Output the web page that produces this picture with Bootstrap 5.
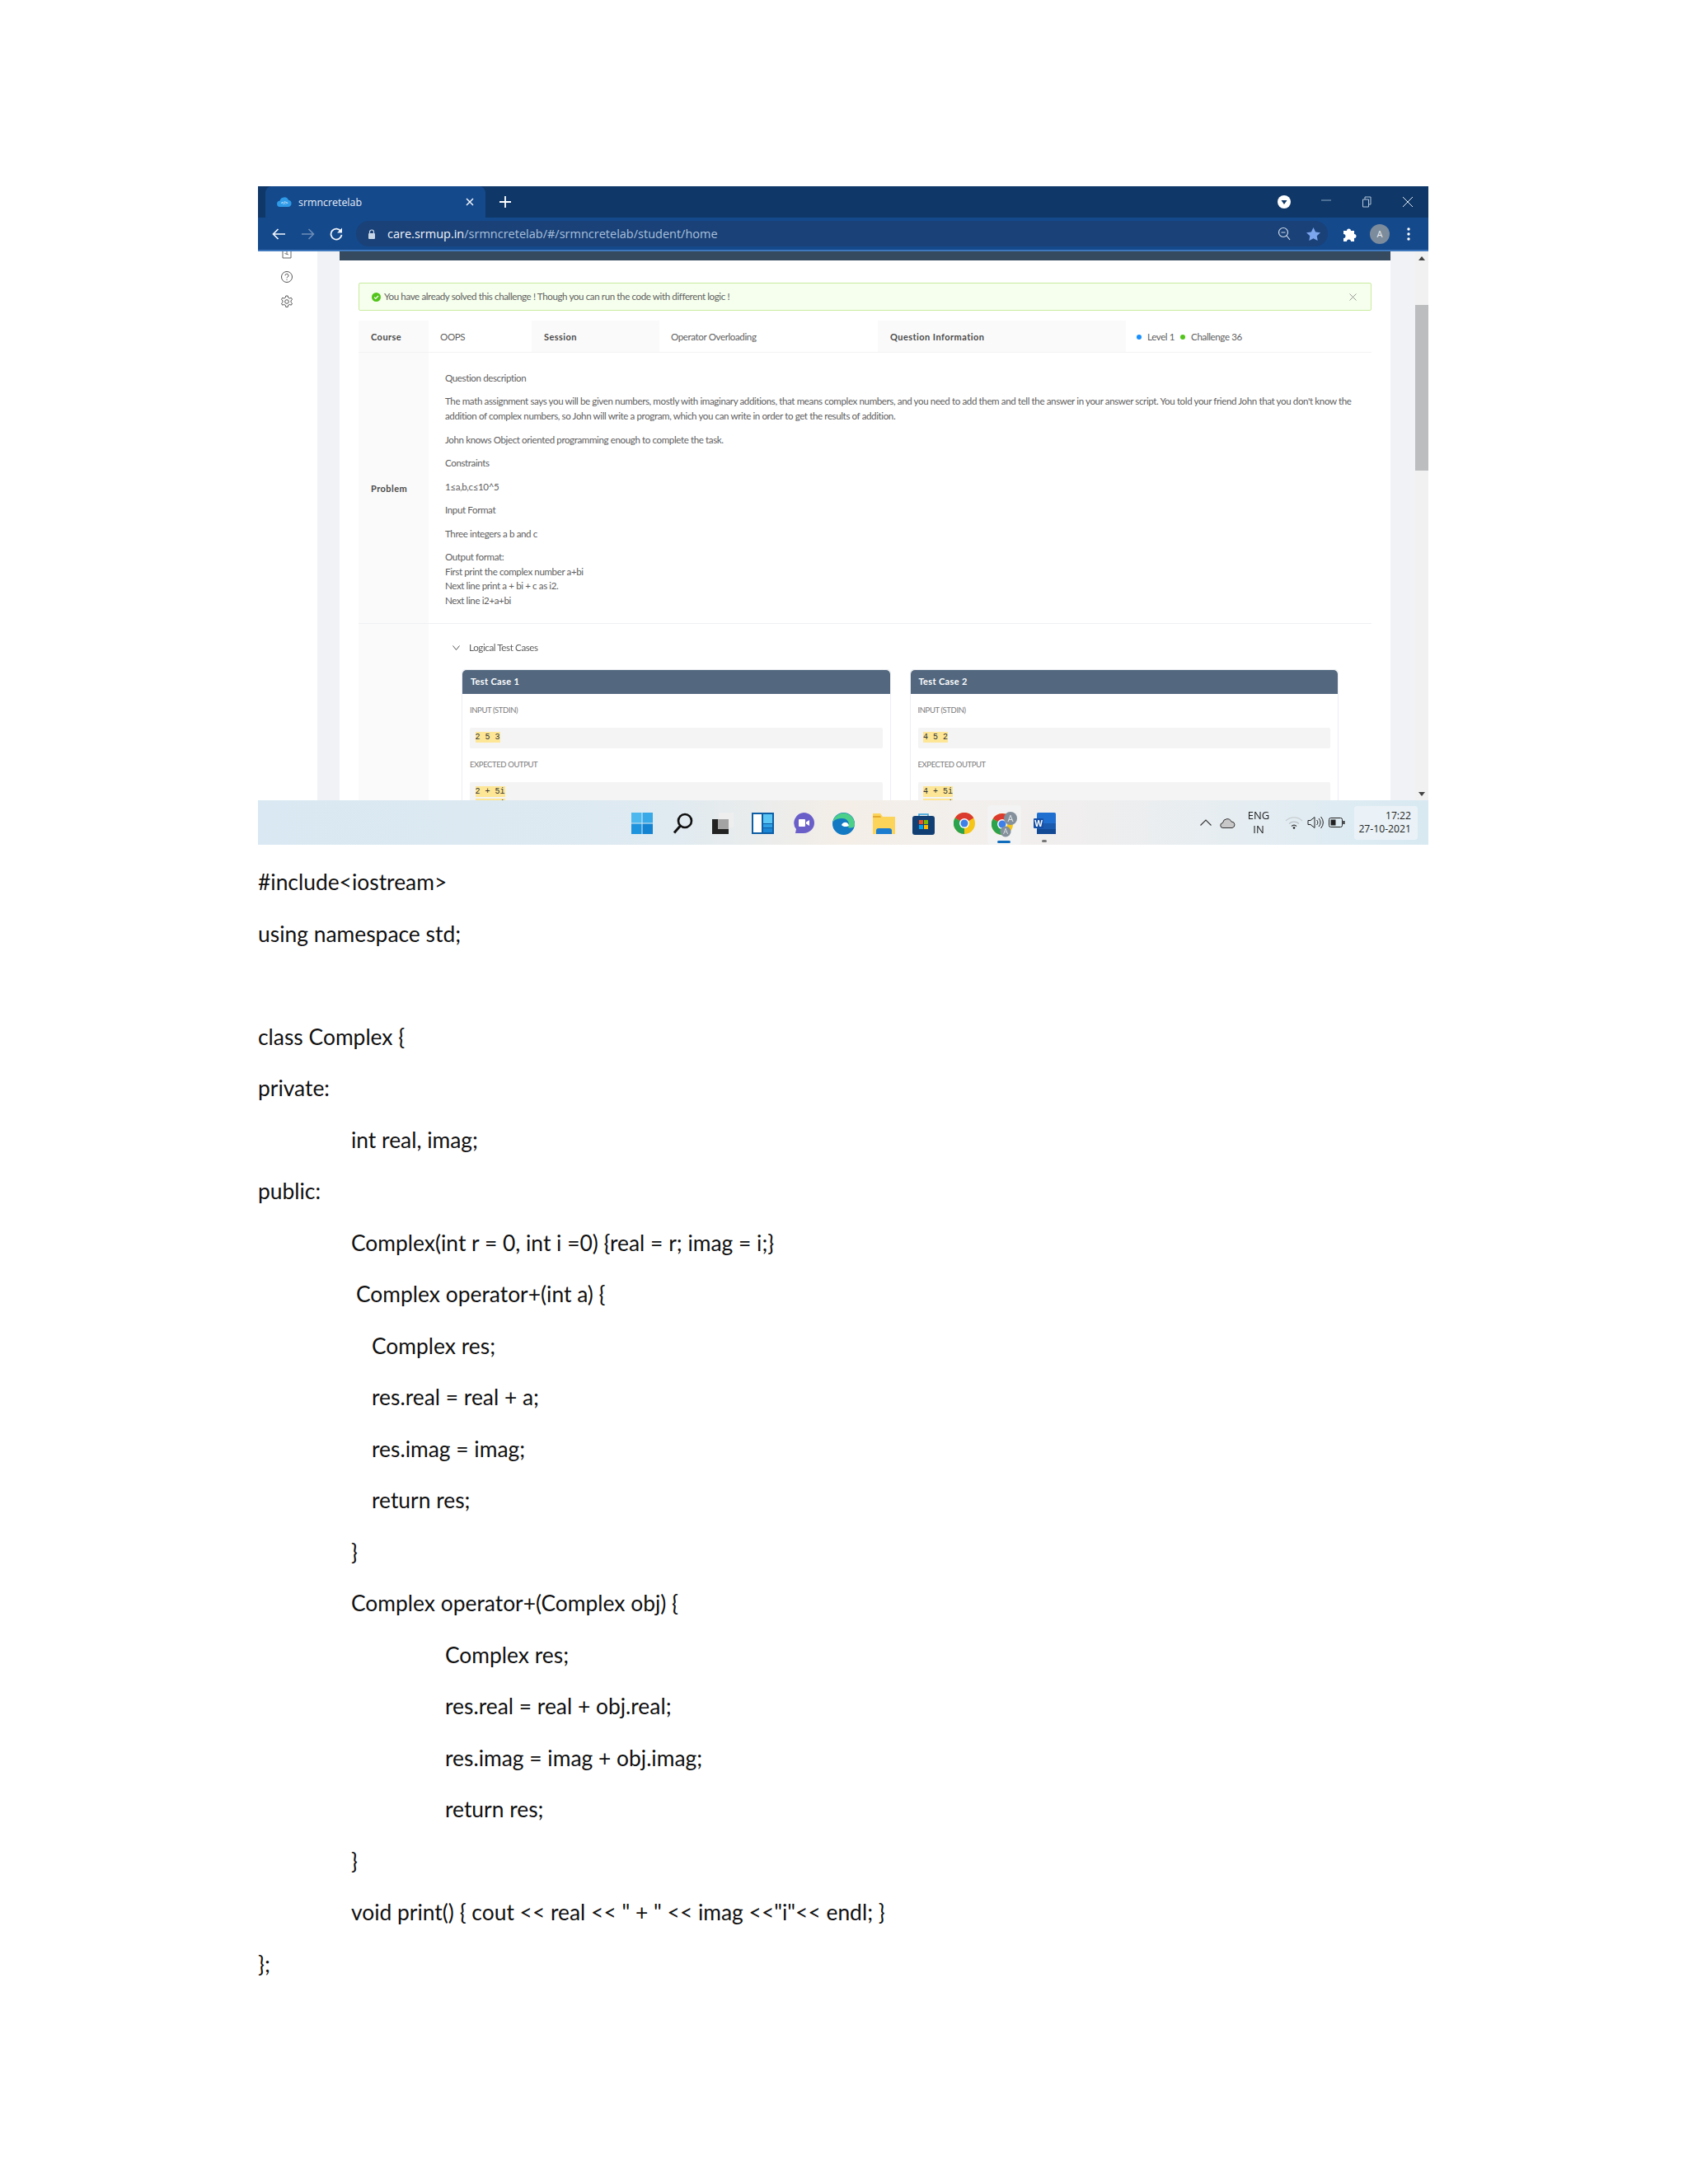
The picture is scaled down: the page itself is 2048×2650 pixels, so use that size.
<!doctype html>
<html lang="en">
<head>
<meta charset="utf-8">
<title>srmncretelab</title>
<link rel="stylesheet" href="https://cdn.jsdelivr.net/npm/bootstrap@5.3.0/dist/css/bootstrap.min.css">
<style>
body{background:#fff;font-family:"Liberation Sans",sans-serif;padding:226px 0 0 313px;margin:0;}
.scr{width:1420px;filter:blur(.35px);}
.tabstrip{height:38px;background:#0f3868;padding-left:9px;}
.ctab{width:267px;height:38px;background:#14498c;border-radius:8px 8px 0 0;color:#e8eef6;font:12.4px "Open Sans",sans-serif;padding:0 14px 0 14px;}
.ctab-name{margin-left:8px;}
.plus{margin-left:17px;}
.winbtns{padding-right:18px;}
.wbtn{margin-left:37px;}
.toolbar{height:41px;background:#14498c;border-bottom:2px solid #3f78bd;padding:0 22px 0 17px;}
.navic{margin-right:18px;}
.navic-last{margin-right:16px;}
.omni{width:1179px;height:31px;background:#1a4178;border-radius:16px;padding:0 9px 0 14px;color:#a9c0dc;font:14.5px "Open Sans",sans-serif;}
.omni-host{color:#f2f6fb;}
.omni-lock{margin-right:14px;}
.omni-end{gap:19px;}
.tool-end{gap:15px;}
.tool-dots{margin-left:6px;}
.avatar{width:24px;height:24px;background:#7c8c9c;color:#e9eef3;font:11px "Open Sans",sans-serif;}
.viewport{height:666px;overflow:hidden;}
.sidebar{width:72px;padding-left:25px;gap:14px;margin-top:-9px;flex:none;}
.gutter-l{width:27px;background:#f0f2f5;flex:none;}
.gutter-r{width:30px;background:#f0f2f5;flex:none;}
.pagebox{width:1275px;flex:none;background:#fff;}
.pagebar{height:11px;background:#354a5f;}
.scrollrail{width:16px;background:#f1f1f1;flex:none;}
.sc-up{height:21px;padding-top:6px;}
.sc-thumb{height:201px;background:#bcbdbf;margin-top:44px;}
.sc-down{margin-top:auto;padding-bottom:5px;}
.lab-font{font-family:"Lato",sans-serif;letter-spacing:-.4px;}
.okbar{height:34px;margin:27px 23px 12px;padding:0 13px 0 15px;background:#f6ffed;border:1px solid #c9eb9f;border-radius:2px;color:#626262;font-size:11.6px;}
.okbar svg{margin-right:4px;}
.infobox{margin:0 23px;color:#5f5f5f;font-size:11.6px;}
.inforow{height:39px;border-bottom:1px solid #f3f3f3;}
.inforow>div{padding-top:2px;}
.lbl{background:#fafafa;color:#4a4a4a;font-weight:700;font-size:11px;letter-spacing:.45px;padding-left:15px;flex:none;}
.w85{width:85px;}
.w125{width:125px;flex:none;}
.w155{width:155px;}
.w265{width:265px;flex:none;}
.w301{width:301px;}
.val2{padding-left:14px;}
.val3{padding-left:13px;}
.dot{width:6px;height:6px;}
.dot-b{background:#1890ff;margin-right:7px;}
.dot-g{background:#52c41a;margin:0 7px;}
.probrow{height:329px;border-bottom:1px solid #eef0f3;}
.probtext{padding:22px 0 0 20px;line-height:17.6px;}
.probtext p{margin:0 0 10.9px;}
.problabel{padding-top:2px;}
.testrow{height:240px;}
.testbody{padding:20px 40px 0;}
.logic{height:18px;line-height:18px;margin-bottom:17px;margin-left:-11px;}
.logic svg{margin-right:11px;}
.tcgap{gap:23px;}
.tc{border:1px solid #eceef1;border-radius:4px 4px 0 0;background:#fff;}
.tc-head{height:29px;background:#53687f;color:#fff;font-weight:700;font-size:11px;letter-spacing:.35px;padding:0 10px;border:0;border-radius:4px 4px 0 0;}
.tc-body{padding:13px 9px 0;}
.tc-lab{font-size:9.5px;color:#7a7a7a;line-height:14px;margin-bottom:14px;}
.tc-pre{background:#f4f4f5;margin:0 0 13px;padding:5px 6.5px;min-height:23px;font:10px/15px "Liberation Mono",monospace;letter-spacing:0;color:#333;overflow:visible;border-radius:2px;}
.hl{background:#fde696;display:inline-block;line-height:13px;height:13px;vertical-align:top;}
.taskbar{height:54px;background:linear-gradient(90deg,#d9e8f2 0%,#dfeaf1 35%,#f4eee7 50%,#f2efec 60%,#f0eeee 70%,#e4edf2 85%,#d8e9f2 100%);padding-left:442px;}
.cell{width:48.8px;height:54px;flex:none;padding-top:2px;}
.cell-on{background:#f2f3f2;width:41px;height:48px;margin:6px 4px 0;border-radius:4px;padding-top:8px;position:relative;}
.mark-on{width:16px;height:3px;background:#0f6cbd;border-radius:2px;position:absolute;bottom:2px;left:12px;}
.mark-off{width:6px;height:3px;background:#777;border-radius:2px;position:absolute;bottom:3px;left:21px;}
.cell-w{position:relative;}
.tray{margin-left:auto;padding-right:13px;color:#222;font:13px/17px "Open Sans",sans-serif;}
.t-cloud{margin:0 8px 0 10px;}
.t-lang{width:40px;margin-right:11px;text-align:center;}
.t-vol{margin:0 6px 0 4px;}
.t-bat{margin-right:11px;}
.clock{width:77px;height:41px;background:#eaf2f7;border-radius:4px;padding:4px 8px 0 0;text-align:right;font-size:12.2px;line-height:16px;}
.docline{font-family:"Lato",sans-serif;font-size:26.4px;line-height:62.5px;height:62.5px;color:#111;white-space:pre;}
.doc{margin-top:14.2px;}
.in1{padding-left:113px;}
.in1a{padding-left:119px;}
.in2{padding-left:138px;}
.in3{padding-left:227px;}
</style>
</head>
<body>
<div class="scr">
  <div class="tabstrip d-flex align-items-center">
    <div class="ctab d-flex align-items-center">
      <svg width="18" height="14" viewBox="0 0 18 14"><path d="M4 13a3.6 3.6 0 0 1-.6-7.2A5.6 5.6 0 0 1 14 4.700a4.200 4.200 0 0 1 0 8.300z" fill="#2f9be8"/><text x="9" y="10" font-size="6" fill="#fff" text-anchor="middle" font-family="Liberation Sans">&lt;/&gt;</text></svg>
      <span class="ctab-name">srmncretelab</span>
      <svg class="ms-auto" width="10" height="10" viewBox="0 0 10 10"><path d="M1 1l8 8M9 1l-8 8" stroke="#f0f4f9" stroke-width="1.500"/></svg>
    </div>
    <svg class="plus" width="14" height="14" viewBox="0 0 14 14"><path d="M7 0v14M0 7h14" stroke="#fff" stroke-width="1.800"/></svg>
    <div class="winbtns ms-auto d-flex align-items-center">
      <svg width="16" height="16" viewBox="0 0 16 16"><circle cx="8" cy="8" r="8" fill="#fff"/><path d="M4.500 6h7L8 11z" fill="#0f3868"/></svg>
      <svg class="wbtn" width="12" height="12" viewBox="0 0 12 12"><path d="M0 4h12" stroke="#8aa3c2" stroke-width="1"/></svg>
      <svg class="wbtn" width="12" height="14" viewBox="0 0 12 14"><path d="M1.500 4h7v9h-7zM4 4V1h7v9H8.500" fill="none" stroke="#b5c5d9" stroke-width="1"/></svg>
      <svg class="wbtn" width="14" height="14" viewBox="0 0 14 14"><path d="M1 1l12 12M13 1L1 13" stroke="#dfe7f1" stroke-width="1"/></svg>
    </div>
  </div>
  <div class="toolbar d-flex align-items-center">
    <svg class="navic" width="17" height="14" viewBox="0 0 17 14"><path d="M16 7H2M7.500 1L1.500 7l6 6" fill="none" stroke="#f2f6fb" stroke-width="1.700"/></svg>
    <svg class="navic" width="17" height="14" viewBox="0 0 17 14"><path d="M1 7h14M9.500 1l6 6-6 6" fill="none" stroke="#6f8fb8" stroke-width="1.500"/></svg>
    <svg class="navic-last" width="16" height="16" viewBox="0 0 16 16"><path d="M13.500 4.500A6.500 6.500 0 1 0 14.500 8.800" fill="none" stroke="#f2f6fb" stroke-width="1.800"/><path d="M15 0.500v6H9z" fill="#f2f6fb"/></svg>
    <div class="omni d-flex align-items-center">
      <svg class="omni-lock" width="10" height="12" viewBox="0 0 10 12"><path d="M2.500 5V3.500a2.500 2.500 0 0 1 5 0V5" fill="none" stroke="#c9d6e6" stroke-width="1.200"/><rect x="1" y="5" width="8" height="7" rx="1" fill="#c9d6e6"/></svg>
      <span><span class="omni-host">care.srmup.in</span>/srmncretelab/#/srmncretelab/student/home</span>
      <div class="omni-end ms-auto d-flex align-items-center">
        <svg width="16" height="17" viewBox="0 0 16 17"><circle cx="7" cy="7" r="5.500" fill="none" stroke="#cfdbe9" stroke-width="1.200"/><path d="M4.500 7h5M11 11l4 5" stroke="#cfdbe9" stroke-width="1.200"/></svg>
        <svg width="17" height="16" viewBox="0 0 17 16"><path d="M8.500 0l2.600 5.400 5.900.8-4.300 4.100 1 5.700-5.200-2.800L3.300 16l1-5.700L0 6.200l5.900-.8z" fill="#7ba6ee"/></svg>
      </div>
    </div>
    <div class="tool-end ms-auto d-flex align-items-center">
      <svg width="18" height="18" viewBox="0 0 18 18"><path d="M1 5h4a2.500 2.500 0 1 1 5 0h4v4a2.500 2.500 0 1 1 0 5v4h-4a2.500 2.500 0 1 0-5 0H1v-4a2.500 2.500 0 1 0 0-5z" fill="#fff"/></svg>
      <div class="avatar rounded-circle d-flex align-items-center justify-content-center">A</div>
      <svg class="tool-dots" width="4" height="16" viewBox="0 0 4 16"><circle cx="2" cy="2" r="1.700" fill="#fff"/><circle cx="2" cy="8" r="1.700" fill="#fff"/><circle cx="2" cy="14" r="1.700" fill="#fff"/></svg>
    </div>
  </div>
  <div class="viewport d-flex">
    <div class="sidebar d-flex flex-column bg-white">
      <svg width="20" height="18" viewBox="0 0 20 18"><path d="M5 1h10v16H5z" fill="none" stroke="#666" stroke-width="1"/><path d="M10 7v6M7.500 11.500L12 13" stroke="#777" stroke-width="1"/></svg>
      <svg width="20" height="16" viewBox="0 0 16 16"><circle cx="8" cy="8" r="6.500" fill="none" stroke="#555" stroke-width="1"/><path d="M6 6.300a2 2 0 1 1 2.800 1.900c-.6.3-.8.600-.8 1.300M8 11v1" fill="none" stroke="#555" stroke-width="1"/></svg>
      <svg width="20" height="16" viewBox="0 0 16 16"><path d="M6.800 1h2.400l.4 2 1.700 1 2-.7 1.200 2.100-1.500 1.400v1.900l1.500 1.400-1.200 2.100-2-.7-1.700 1-.4 2H6.800l-.4-2-1.700-1-2 .7-1.200-2.100 1.500-1.400V6.800L1.500 5.400l1.200-2.100 2 .7 1.700-1z" fill="none" stroke="#555" stroke-width="1"/><circle cx="8" cy="8" r="2.300" fill="none" stroke="#555" stroke-width="1"/></svg>
    </div>
    <div class="gutter-l"></div>
    <div class="pagebox lab-font">
      <div class="pagebar"></div>
      <div class="okbar d-flex align-items-center">
        <svg width="11" height="11" viewBox="0 0 11 11"><circle cx="5.500" cy="5.500" r="5.500" fill="#52c41a"/><path d="M3 5.700l1.800 1.800L8 4" fill="none" stroke="#fff" stroke-width="1.200"/></svg>
        <span>You have already solved this challenge ! Though you can run the code with different logic !</span>
        <svg class="ms-auto" width="9" height="9" viewBox="0 0 9 9"><path d="M.5.500l8 8M8.500.500l-8 8" stroke="#8c8c8c" stroke-width=".9"/></svg>
      </div>
      <div class="infobox">
        <div class="inforow d-flex">
          <div class="lbl w85 d-flex align-items-center">Course</div>
          <div class="w125 val2 d-flex align-items-center">OOPS</div>
          <div class="lbl w155 d-flex align-items-center">Session</div>
          <div class="w265 val2 d-flex align-items-center">Operator Overloading</div>
          <div class="lbl w301 d-flex align-items-center">Question Information</div>
          <div class="val3 d-flex align-items-center flex-grow-1"><span class="dot dot-b rounded-circle"></span>Level 1<span class="dot dot-g rounded-circle"></span>Challenge 36</div>
        </div>
        <div class="probrow d-flex">
          <div class="lbl w85 problabel d-flex align-items-center">Problem</div>
          <div class="probtext flex-grow-1">
            <p>Question description</p>
            <p>The math assignment says you will be given numbers, mostly with imaginary additions, that means complex numbers, and you need to add them and tell the answer in your answer script. You told your friend John that you don't know the<br>addition of complex numbers, so John will write a program, which you can write in order to get the results of addition.</p>
            <p>John knows Object oriented programming enough to complete the task.</p>
            <p>Constraints</p>
            <p>1≤a,b,c≤10^5</p>
            <p>Input Format</p>
            <p>Three integers a b and c</p>
            <p>Output format:<br>First print the complex number a+bi<br>Next line print a + bi + c as i2.<br>Next line i2+a+bi</p>
          </div>
        </div>
        <div class="testrow d-flex">
          <div class="lbl w85"></div>
          <div class="testbody flex-grow-1">
            <div class="logic d-flex align-items-center">
              <svg width="9" height="6" viewBox="0 0 9 6"><path d="M.5.500L4.500 5.500 8.500.500" fill="none" stroke="#555" stroke-width="1"/></svg>
              <span>Logical Test Cases</span>
            </div>
            <div class="d-flex tcgap">
              <div class="card tc flex-fill">
                <div class="card-header tc-head d-flex align-items-center">Test Case 1</div>
                <div class="card-body tc-body">
                  <div class="tc-lab">INPUT (STDIN)</div>
                  <pre class="tc-pre"><span class="hl">2 5 3</span></pre>
                  <div class="tc-lab">EXPECTED OUTPUT</div>
                  <pre class="tc-pre"><span class="hl">2 + 5i</span>
<span class="hl">5 + 5i</span></pre>
                </div>
              </div>
              <div class="card tc flex-fill">
                <div class="card-header tc-head d-flex align-items-center">Test Case 2</div>
                <div class="card-body tc-body">
                  <div class="tc-lab">INPUT (STDIN)</div>
                  <pre class="tc-pre"><span class="hl">4 5 2</span></pre>
                  <div class="tc-lab">EXPECTED OUTPUT</div>
                  <pre class="tc-pre"><span class="hl">4 + 5i</span>
<span class="hl">6 + 5i</span></pre>
                </div>
              </div>
            </div>
          </div>
        </div>
      </div>
    </div>
    <div class="gutter-r"></div>
    <div class="scrollrail d-flex flex-column align-items-center">
      <div class="sc-up"><svg class="d-block" width="8" height="5" viewBox="0 0 8 5"><path d="M4 0l4 5H0z" fill="#444"/></svg></div>
      <div class="sc-thumb w-100"></div>
      <div class="sc-down"><svg class="d-block" width="8" height="5" viewBox="0 0 8 5"><path d="M0 0h8L4 5z" fill="#444"/></svg></div>
    </div>
  </div>
  <div class="taskbar d-flex align-items-center">
    <div class="cell d-flex align-items-center justify-content-center">
      <svg width="26" height="26" viewBox="0 0 26 26"><rect width="12.500" height="12.500" fill="#4db8ee"/><rect x="13.500" width="12.500" height="12.500" fill="#3aa9e8"/><rect y="13.500" width="12.500" height="12.500" fill="#1f94de"/><rect x="13.500" y="13.500" width="12.500" height="12.500" fill="#1483d2"/></svg>
    </div>
    <div class="cell d-flex align-items-center justify-content-center">
      <svg width="25" height="26" viewBox="0 0 25 26"><circle cx="15" cy="10" r="8" fill="none" stroke="#111" stroke-width="2.600"/><path d="M9.500 16L2 24.500" stroke="#111" stroke-width="3"/></svg>
    </div>
    <div class="cell d-flex align-items-center justify-content-center">
      <svg width="26" height="26" viewBox="0 0 26 26"><rect x="0" y="8" width="20" height="18" fill="#222"/><rect x="8" y="0" width="18" height="18" fill="#eeeeee"/><rect x="7" y="8" width="13" height="12" fill="#a3a3a3"/></svg>
    </div>
    <div class="cell d-flex align-items-center justify-content-center">
      <svg width="27" height="26" viewBox="0 0 27 26"><rect width="27" height="26" fill="#0e5ea5"/><rect x="2" y="2" width="10" height="22" fill="#fff"/><rect x="14" y="2" width="11" height="11" fill="#5bc6f4"/><rect x="14" y="14" width="11" height="4" fill="#2f9fe4"/><rect x="14" y="19" width="11" height="5" fill="#1b86d6"/></svg>
    </div>
    <div class="cell d-flex align-items-center justify-content-center">
      <svg width="26" height="27" viewBox="0 0 26 27"><path d="M13 0a13 12.500 0 0 1 0 25H3l1-5A13 12.500 0 0 1 13 0z" fill="#6a5fc9"/><rect x="7" y="8" width="8" height="9" rx="1" fill="#fff"/><path d="M16 11.500l4-2.500v7l-4-2.500z" fill="#fff"/></svg>
    </div>
    <div class="cell d-flex align-items-center justify-content-center">
      <svg width="27" height="27" viewBox="0 0 27 27"><circle cx="13.500" cy="13.500" r="13.500" fill="#1279c2"/><path d="M1 9A13.500 13.500 0 0 1 27 14c0 4-4 5.500-8 4 3-5-1-11-7-11C7 7 3 8 1 11z" fill="#4ccf88"/><path d="M11 15c1-4 8-5 9 1-3 2-8 1-9-1z" fill="#fff"/></svg>
    </div>
    <div class="cell d-flex align-items-center justify-content-center">
      <svg width="27" height="25" viewBox="0 0 27 25"><path d="M0 0h9l3 4h15v21H0z" fill="#fcd45a"/><path d="M0 3h9l1 2H0z" fill="#e5aa2c"/><path d="M4 25v-4q0-3 3-3h13q3 0 3 3v4z" fill="#1c7cd0"/></svg>
    </div>
    <div class="cell d-flex align-items-center justify-content-center">
      <svg width="27" height="27" viewBox="0 0 27 27"><path d="M8 5V2h11v3" fill="none" stroke="#2b9fd9" stroke-width="1.500"/><rect y="4" width="27" height="23" rx="3" fill="#123f73"/><rect x="8" y="9" width="5" height="5" fill="#f25022"/><rect x="14" y="9" width="5" height="5" fill="#7fba00"/><rect x="8" y="15" width="5" height="5" fill="#00a4ef"/><rect x="14" y="15" width="5" height="5" fill="#ffb900"/></svg>
    </div>
    <div class="cell d-flex align-items-center justify-content-center">
      <svg width="26" height="26" viewBox="0 0 26 26"><circle cx="13" cy="13" r="13" fill="#f5c518"/><path d="M13 13L1.700 6.500A13 13 0 0 1 24.300 6.500z" fill="#db3a2e"/><path d="M13 13L1.700 6.500A13 13 0 0 0 13 26z" fill="#2ba24c"/><circle cx="13" cy="13" r="6" fill="#fff"/><circle cx="13" cy="13" r="4.500" fill="#3f7fe8"/></svg>
    </div>
    <div class="cell-on">
      <svg class="d-block mx-auto" width="32" height="32" viewBox="0 0 32 32"><circle cx="13" cy="15" r="13" fill="#f5c518"/><path d="M13 15L1.700 8.500A13 13 0 0 1 24.300 8.500z" fill="#db3a2e"/><path d="M13 15L1.700 8.500A13 13 0 0 0 13 28z" fill="#2ba24c"/><circle cx="13" cy="15" r="6" fill="#fff"/><circle cx="13" cy="15" r="4.500" fill="#3f7fe8"/><circle cx="23" cy="8" r="8" fill="#84909b"/><text x="23" y="12" font-size="11" fill="#dfe4e8" text-anchor="middle" font-family="Open Sans">A</text><circle cx="17" cy="24" r="6.500" fill="#84909b"/><text x="17" y="27" font-size="9" fill="#dfe4e8" text-anchor="middle" font-family="Open Sans">A</text></svg>
      <span class="mark-on"></span>
    </div>
    <div class="cell cell-w d-flex align-items-center justify-content-center">
      <svg width="27" height="26" viewBox="0 0 27 26"><rect x="4" width="23" height="26" rx="1.500" fill="#1f6fd0"/><rect x="4" y="13" width="23" height="7" fill="#1a5bb0"/><rect x="4" y="20" width="23" height="6" fill="#124a95"/><rect x="0" y="7" width="12" height="12" rx="1" fill="#154fa6"/><text x="6" y="17" font-size="10" font-weight="700" fill="#fff" text-anchor="middle" font-family="Open Sans">W</text></svg>
      <span class="mark-off"></span>
    </div>
    <div class="tray d-flex align-items-center">
      <svg width="14" height="8" viewBox="0 0 14 8"><path d="M.5 7.500L7 1l6.500 6.500" fill="none" stroke="#333" stroke-width="1.100"/></svg>
      <svg class="t-cloud" width="19" height="13" viewBox="0 0 19 13"><path d="M4 12.500a3 3 0 0 1-.5-6A5.500 5.500 0 0 1 14 5a3.800 3.800 0 0 1 1 7.500z" fill="#c8c8c8" stroke="#333" stroke-width="1"/></svg>
      <div class="t-lang">ENG<br>IN</div>
      <svg width="24" height="16" viewBox="0 0 24 16"><path d="M2 6a14 14 0 0 1 20 0" fill="none" stroke="#c9ced2" stroke-width="1.200"/><path d="M6 9.500a9 9 0 0 1 12 0" fill="none" stroke="#b9bfc4" stroke-width="1.200"/><path d="M9 12.500a4.500 4.500 0 0 1 6 0" fill="none" stroke="#333" stroke-width="1.200"/><circle cx="12" cy="14.500" r="1.300" fill="#222"/></svg>
      <svg class="t-vol" width="20" height="16" viewBox="0 0 20 16"><path d="M1 5.500h3L9 1.500v13l-5-4H1z" fill="none" stroke="#222" stroke-width="1"/><path d="M11.500 5a4 4 0 0 1 0 6M14 3a7 7 0 0 1 0 10M16.500 1a10 10 0 0 1 0 14" fill="none" stroke="#222" stroke-width="1"/></svg>
      <svg class="t-bat" width="20" height="12" viewBox="0 0 20 12"><rect x=".5" y=".5" width="16" height="11" rx="2" fill="none" stroke="#222" stroke-width="1"/><rect x="2.500" y="2.500" width="6" height="7" fill="#222"/><rect x="17.500" y="4" width="2" height="4" fill="#222"/></svg>
      <div class="clock">17:22<br>27-10-2021</div>
    </div>
  </div>
</div>
<div class="doc">
<div class="docline">#include&lt;iostream&gt;</div>
<div class="docline">using namespace std;</div>
<div class="docline"> </div>
<div class="docline">class Complex {</div>
<div class="docline">private:</div>
<div class="docline in1">int real, imag;</div>
<div class="docline">public:</div>
<div class="docline in1">Complex(int r = 0, int i =0) {real = r; imag = i;}</div>
<div class="docline in1a">Complex operator+(int a) {</div>
<div class="docline in2">Complex res;</div>
<div class="docline in2">res.real = real + a;</div>
<div class="docline in2">res.imag = imag;</div>
<div class="docline in2">return res;</div>
<div class="docline in1">}</div>
<div class="docline in1">Complex operator+(Complex obj) {</div>
<div class="docline in3">Complex res;</div>
<div class="docline in3">res.real = real + obj.real;</div>
<div class="docline in3">res.imag = imag + obj.imag;</div>
<div class="docline in3">return res;</div>
<div class="docline in1">}</div>
<div class="docline in1">void print() { cout &lt;&lt; real &lt;&lt; " + " &lt;&lt; imag &lt;&lt;"i"&lt;&lt; endl; }</div>
<div class="docline">};</div>
</div>
<script src="https://cdn.jsdelivr.net/npm/bootstrap@5.3.0/dist/js/bootstrap.bundle.min.js"></script>
</body>
</html>
